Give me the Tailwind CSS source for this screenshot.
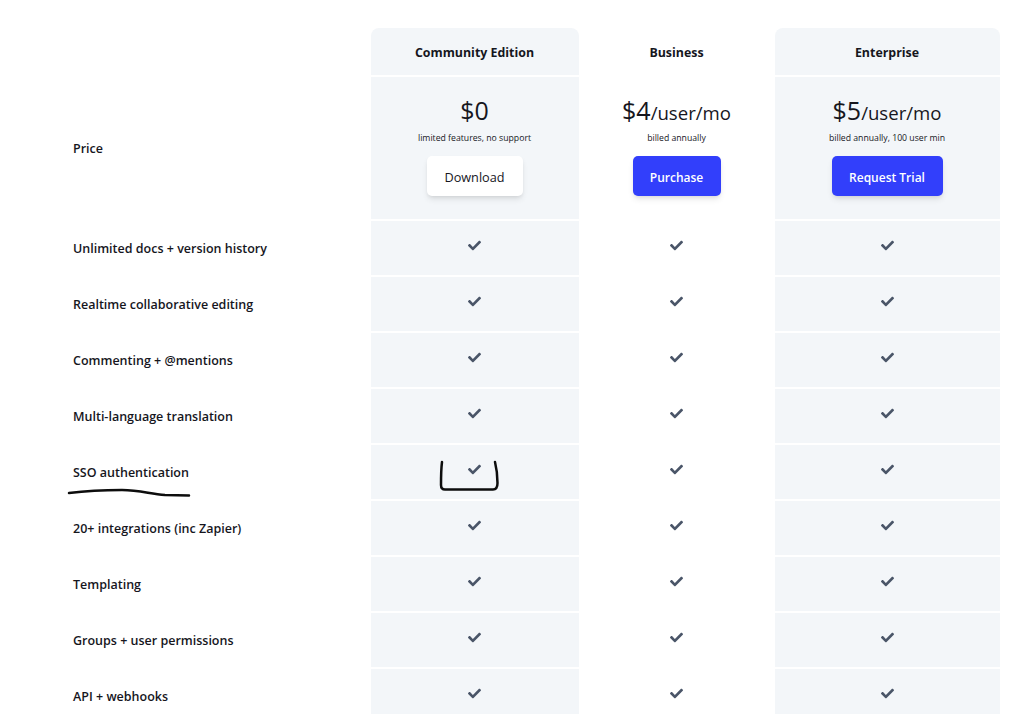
<!DOCTYPE html>
<html lang="en">
<head>
    <meta charset="UTF-8">
    <meta name="viewport" content="width=device-width, initial-scale=1.0">
    <title>Pricing</title>
    <script src="https://cdn.jsdelivr.net/npm/@tailwindcss/browser@4"></script>
</head>
<body class="bg-white text-[#16161d] font-['Open_Sans',sans-serif]">
    <div class="relative h-[714px] overflow-hidden pt-[28px] pl-[56.5px]">
        <table class="table-fixed w-[943px] text-center">
            <colgroup>
                <col class="w-[314px]">
                <col class="w-[208px]">
                <col class="w-[196px]">
                <col class="w-[225px]">
            </colgroup>
            <thead>
                <tr class="h-[48px] text-[12.4px] font-bold">
                    <th></th>
                    <th class="bg-[#f3f6f9] rounded-t-lg border-b-2 border-white pt-[4px]">Community Edition</th>
                    <th class="border-b-2 border-white pt-[4px]">Business</th>
                    <th class="bg-[#f3f6f9] rounded-t-lg border-b-2 border-white pt-[4px]">Enterprise</th>
                </tr>
            </thead>
            <tbody>
                <tr class="h-[144px]">
                    <td class="pl-[16.5px] pt-[2px] text-left text-[12.5px] font-semibold">Price</td>
                    <td class="bg-[#f3f6f9] border-b-2 border-white align-top pt-[16px]">
                        <div class="h-[34px] text-[25px] leading-[34px]">$0</div>
                        <div class="mt-[4px] text-[8.7px] leading-[14px]">limited features, no support</div>
                        <button class="mt-[11px] w-[96px] h-[40px] pt-[3px] bg-white rounded-[5px] shadow-md text-[12.7px] font-medium">Download</button>
                    </td>
                    <td class="border-b-2 border-white align-top pt-[16px]">
                        <div class="h-[34px] text-[25px] leading-[34px]">$4<span class="text-[18.6px]">/user/mo</span></div>
                        <div class="mt-[4px] text-[8.7px] leading-[14px]">billed annually</div>
                        <button class="mt-[11px] w-[88px] h-[40px] pt-[3px] bg-[#323ffb] text-white rounded-[5px] shadow-md text-[12px] font-semibold">Purchase</button>
                    </td>
                    <td class="bg-[#f3f6f9] border-b-2 border-white align-top pt-[16px]">
                        <div class="h-[34px] text-[25px] leading-[34px]">$5<span class="text-[18.6px]">/user/mo</span></div>
                        <div class="mt-[4px] text-[8.7px] leading-[14px]">billed annually, 100 user min</div>
                        <button class="mt-[11px] w-[111px] h-[40px] pt-[3px] bg-[#323ffb] text-white rounded-[5px] shadow-md text-[12px] font-semibold">Request Trial</button>
                    </td>
                </tr>
            </tbody>
            <tbody id="rows"></tbody>
        </table>

        <!-- marker scribbles over the table -->
        <svg class="absolute left-0 top-0 pointer-events-none" width="1024" height="714" fill="none" stroke="#0d0d0d" stroke-width="2.5" stroke-linecap="round" stroke-linejoin="round">
            <path d="M69 493 C85 491 105 490 122 490 C140 490 150 494 165 495 L189 495.5"/>
            <path d="M442 462 C441 470 441 478 441 485 C441 488 442 489.5 445 489.5 L493 489.5 C496 489.5 497.5 487 497.5 483 C497.5 475 496.5 468 495 462"/>
        </svg>
    </div>

    <script>
        const features = [
            'Unlimited docs + version history',
            'Realtime collaborative editing',
            'Commenting + @mentions',
            'Multi-language translation',
            'SSO authentication',
            '20+ integrations (inc Zapier)',
            'Templating',
            'Groups + user permissions',
            'API + webhooks'
        ];

        const check = `<svg class="mx-auto" width="13" height="13" viewBox="0 0 512 512" fill="#4a5568"><path d="M173.898 439.404l-166.4-166.4c-9.997-9.997-9.997-26.206 0-36.204l36.203-36.204c9.997-9.998 26.207-9.998 36.204 0L192 312.69 432.095 72.596c9.997-9.997 26.207-9.997 36.204 0l36.203 36.204c9.997 9.997 9.997 26.206 0 36.204l-294.4 294.401c-9.998 9.997-26.207 9.997-36.204-.001z"/></svg>`;

        document.getElementById('rows').innerHTML = features.map(f => `
            <tr class="h-[56px]">
                <td class="pl-[16.5px] pt-[2px] text-left text-[12.5px] font-semibold">${f}</td>
                <td class="bg-[#f3f6f9] border-b-2 border-white align-top pt-[18px]">${check}</td>
                <td class="border-b-2 border-white align-top pt-[18px]">${check}</td>
                <td class="bg-[#f3f6f9] border-b-2 border-white align-top pt-[18px]">${check}</td>
            </tr>`).join('');
    </script>
</body>
</html>
